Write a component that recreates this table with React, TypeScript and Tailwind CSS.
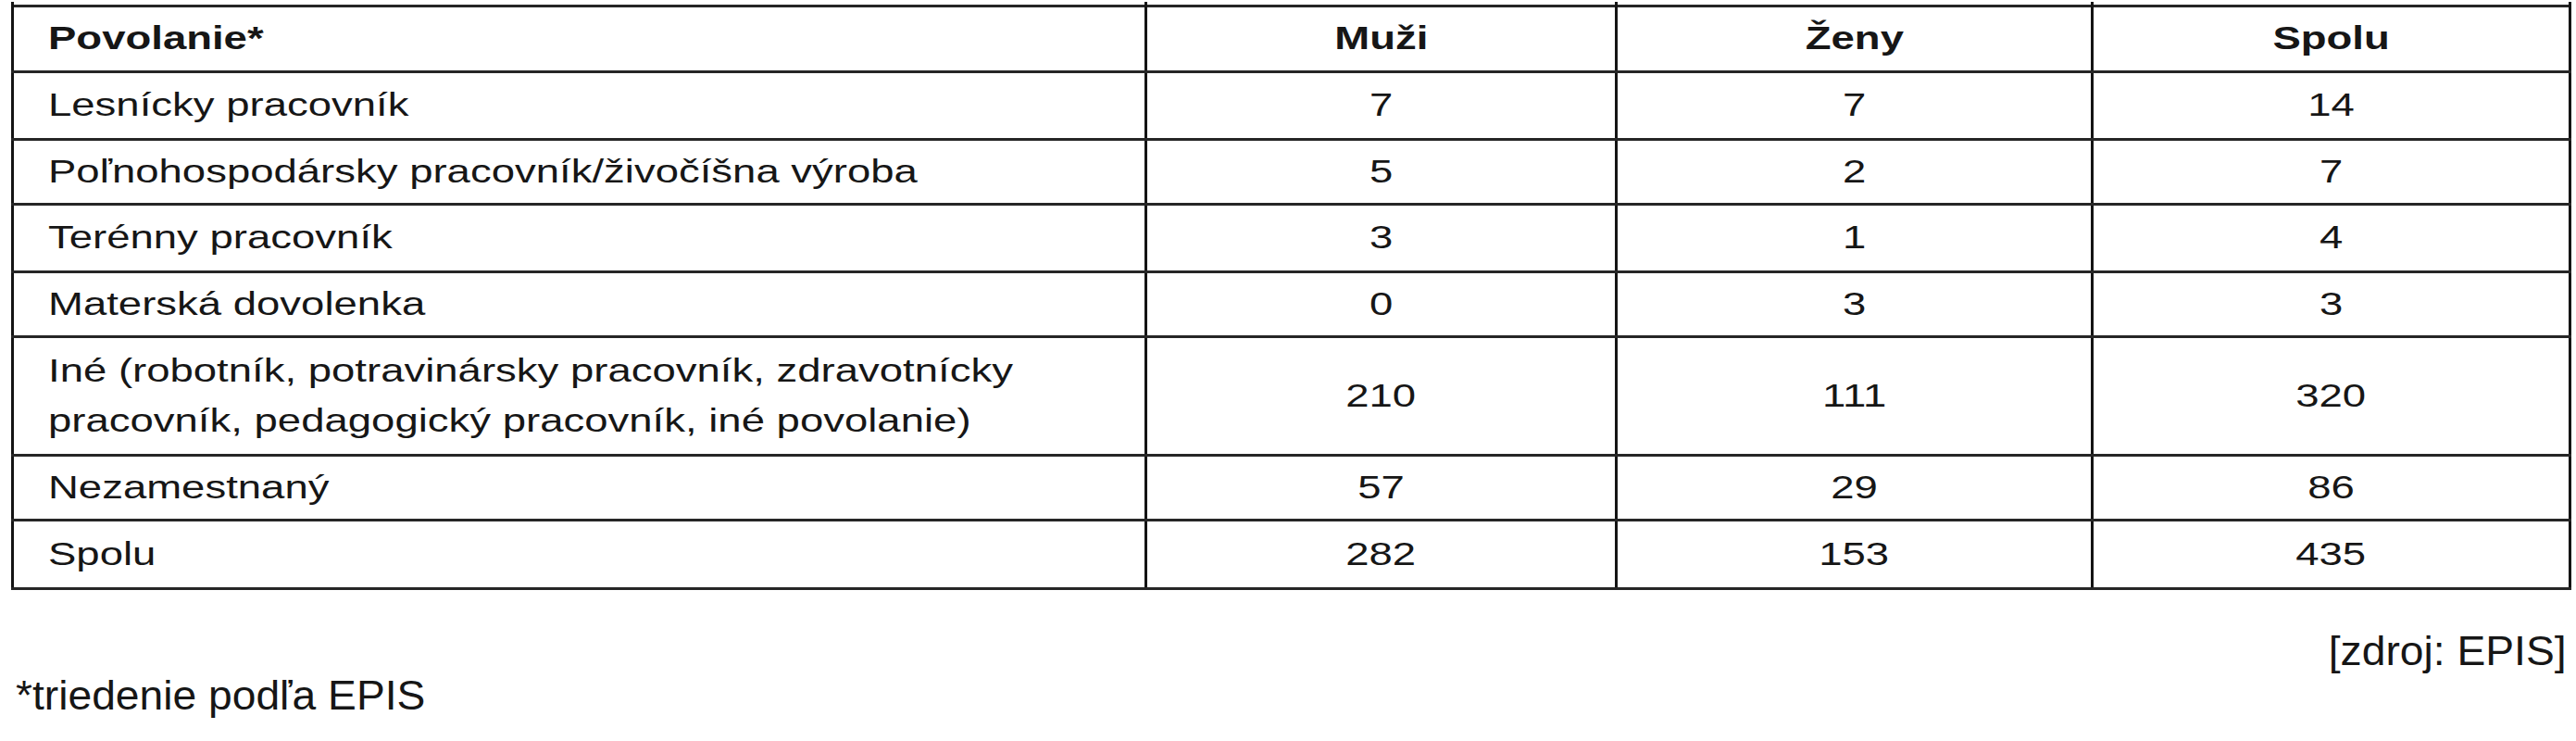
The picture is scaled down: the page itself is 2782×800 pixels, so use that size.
import React from "react";

type Row = { label: React.ReactNode; men: number; women: number; total: number; h: string; leading?: string };

const rows: Row[] = [
  { label: "Lesnícky pracovník", men: 7, women: 7, total: 14, h: "h-[73px]" },
  { label: "Poľnohospodársky pracovník/živočíšna výroba", men: 5, women: 2, total: 7, h: "h-[70px]" },
  { label: "Terénny pracovník", men: 3, women: 1, total: 4, h: "h-[73px]" },
  { label: "Materská dovolenka", men: 0, women: 3, total: 3, h: "h-[70px]" },
  {
    label: (
      <>
        Iné (robotník, potravinársky pracovník, zdravotnícky
        <br />
        pracovník, pedagogický pracovník, iné povolanie)
      </>
    ),
    men: 210,
    women: 111,
    total: 320,
    h: "h-[128px]",
    leading: "leading-[54px]",
  },
  { label: "Nezamestnaný", men: 57, women: 29, total: 86, h: "h-[70px]" },
  { label: "Spolu", men: 282, women: 153, total: 435, h: "h-[74px]" },
];

// borders: horizontal rules a bit heavier and greyer than the verticals
const cell = "border-l-[3px] border-r-[3px] border-t-[3px] border-b-[3px] border-l-[#141414] border-r-[#141414] border-t-[#262626] border-b-[#262626] align-middle p-0";
const stub = "border-l-[3px] border-r-[3px] border-l-[#141414] border-r-[#141414] p-0";

export default function App() {
  return (
    <div className="w-[2782px] h-[800px] bg-white text-[#161616] font-['Liberation_Sans',Arial,Helvetica,sans-serif] pt-[2px]">
      <table className="ml-[12px] w-[2762px] table-fixed border-collapse">
        <colgroup>
          <col className="w-[1224px]" />
          <col className="w-[508px]" />
          <col className="w-[514px]" />
          <col className="w-[516px]" />
        </colgroup>
        <tbody>
          {/* little ticks of the column rules above the top line */}
          <tr className="h-[4px]">
            <td className={stub} />
            <td className={stub} />
            <td className={stub} />
            <td className={stub} />
          </tr>
          <tr className="h-[71px] text-[35px] font-bold">
            <td className={`${cell} pl-[37px]`}>
              <span className="inline-block origin-left scale-x-130 whitespace-nowrap">Povolanie*</span>
            </td>
            <td className={`${cell} text-center`}>
              <span className="inline-block scale-x-130">Muži</span>
            </td>
            <td className={`${cell} text-center`}>
              <span className="inline-block scale-x-130">Ženy</span>
            </td>
            <td className={`${cell} text-center`}>
              <span className="inline-block scale-x-130">Spolu</span>
            </td>
          </tr>
          {rows.map((r, i) => (
            <tr key={i} className={`${r.h} text-[35px]`}>
              <td className={`${cell} pl-[37px]`}>
                <span className={`inline-block origin-left scale-x-130 whitespace-nowrap ${r.leading ?? ""}`}>{r.label}</span>
              </td>
              <td className={`${cell} text-center`}>
                <span className="inline-block scale-x-130">{r.men}</span>
              </td>
              <td className={`${cell} text-center`}>
                <span className="inline-block scale-x-130">{r.women}</span>
              </td>
              <td className={`${cell} text-center`}>
                <span className="inline-block scale-x-130">{r.total}</span>
              </td>
            </tr>
          ))}
        </tbody>
      </table>

      <div className="mt-[42px] text-[44px] leading-[48px]">
        <div className="flex justify-end pr-[10px]">
          <span className="inline-block origin-right scale-x-105">[zdroj: EPIS]</span>
        </div>
        <div className="pl-[17px]">
          <span className="inline-block origin-left scale-x-105">*triedenie podľa EPIS</span>
        </div>
      </div>
    </div>
  );
}
